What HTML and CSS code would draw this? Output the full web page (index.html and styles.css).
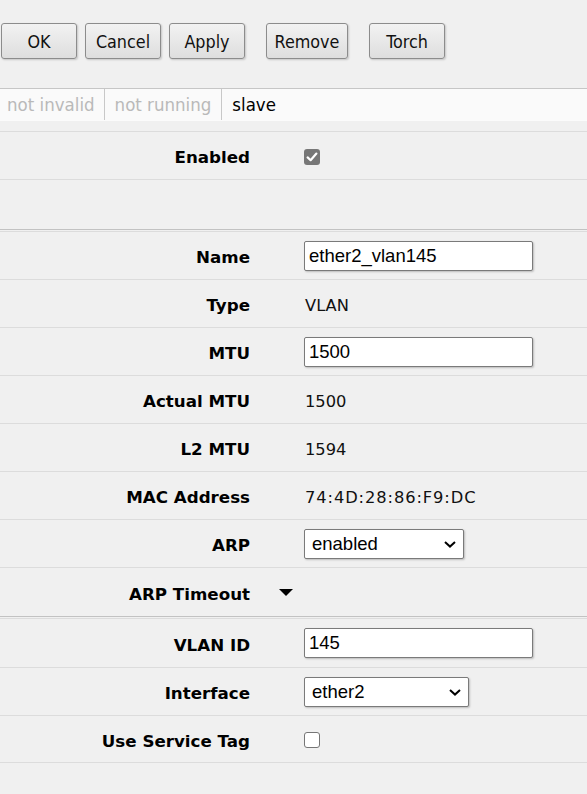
FILE: index.html
```html
<!DOCTYPE html>
<html>
<head>
<meta charset="utf-8">
<title>Interface &lt;ether2_vlan145&gt;</title>
<link rel="stylesheet" href="styles.css">
</head>
<body>
  <div class="toolbar">
    <button class="btn">OK</button>
    <button class="btn">Cancel</button>
    <button class="btn">Apply</button>
    <button class="btn btn-wide btn-apart">Remove</button>
    <button class="btn btn-apart">Torch</button>
  </div>

  <div class="status">
    <div class="status-cell off">not invalid</div>
    <div class="status-cell off">not running</div>
    <div class="status-cell on">slave</div>
  </div>

  <div class="form">
    <div class="section">
      <div class="row">
        <div class="label">Enabled</div>
        <div class="toggle"></div>
        <div class="value">
          <span class="checkbox checked">
            <svg width="16" height="16" viewBox="0 0 16 16"><path d="M3.6 8.4 L6.6 11.2 L12.4 4.6" fill="none" stroke="#fff" stroke-width="2.2" stroke-linecap="round" stroke-linejoin="round"/></svg>
          </span>
        </div>
      </div>
      <div class="row row-blank"></div>
    </div>

    <div class="section">
      <div class="row">
        <div class="label">Name</div>
        <div class="toggle"></div>
        <div class="value"><input class="input" type="text" value="ether2_vlan145"></div>
      </div>
      <div class="row">
        <div class="label">Type</div>
        <div class="toggle"></div>
        <div class="value text">VLAN</div>
      </div>
      <div class="row">
        <div class="label">MTU</div>
        <div class="toggle"></div>
        <div class="value"><input class="input" type="text" value="1500"></div>
      </div>
      <div class="row">
        <div class="label">Actual MTU</div>
        <div class="toggle"></div>
        <div class="value text">1500</div>
      </div>
      <div class="row">
        <div class="label">L2 MTU</div>
        <div class="toggle"></div>
        <div class="value text">1594</div>
      </div>
      <div class="row">
        <div class="label">MAC Address</div>
        <div class="toggle"></div>
        <div class="value text mac">74:4D:28:86:F9:DC</div>
      </div>
      <div class="row">
        <div class="label">ARP</div>
        <div class="toggle"></div>
        <div class="value">
          <div class="select select-arp">
            <span>enabled</span>
            <svg class="chev" width="12" height="7" viewBox="0 0 12 7"><path d="M1 1 L6 5.6 L11 1" fill="none" stroke="#000" stroke-width="2"/></svg>
          </div>
        </div>
      </div>
      <div class="row row-tall">
        <div class="label">ARP Timeout</div>
        <div class="toggle"><span class="tri"></span></div>
        <div class="value"></div>
      </div>
    </div>

    <div class="section">
      <div class="row row-tall">
        <div class="label">VLAN ID</div>
        <div class="toggle"></div>
        <div class="value"><input class="input" type="text" value="145"></div>
      </div>
      <div class="row">
        <div class="label">Interface</div>
        <div class="toggle"></div>
        <div class="value">
          <div class="select select-iface">
            <span>ether2</span>
            <svg class="chev" width="12" height="7" viewBox="0 0 12 7"><path d="M1 1 L6 5.6 L11 1" fill="none" stroke="#000" stroke-width="2"/></svg>
          </div>
        </div>
      </div>
      <div class="row row-short">
        <div class="label">Use Service Tag</div>
        <div class="toggle"></div>
        <div class="value"><span class="checkbox"></span></div>
      </div>
    </div>
  </div>
</body>
</html>
```

FILE: styles.css
```css
html, body {
  margin: 0;
  padding: 0;
  background: #f0f0f0;
}

body {
  width: 587px;
  height: 794px;
  overflow: hidden;
  font-family: "DejaVu Sans", Verdana, sans-serif;
  color: #000;
}

.toolbar {
  display: flex;
  gap: 8px;
  padding: 23px 0 0 1px;
  height: 36px;
}

.btn {
  box-sizing: border-box;
  width: 76px;
  height: 36px;
  margin: 0;
  padding: 1px 0 0;
  border: 1px solid #8c8c8c;
  border-radius: 3px;
  background: linear-gradient(#f2f2f2, #dedede);
  box-shadow: 1px 1px 2px rgba(0, 0, 0, 0.18);
  font-family: "DejaVu Sans Condensed", "DejaVu Sans", sans-serif;
  font-stretch: condensed;
  font-size: 17.8px;
  color: #111;
}

.btn-wide {
  width: 82px;
}

.btn-apart {
  margin-left: 13px;
}

.status {
  display: flex;
  margin-top: 29px;
  height: 31px;
  border-top: 1px solid #c6c6c6;
  border-bottom: 1px solid #fbfbfb;
  background: #fafafa;
}

.status-cell {
  display: flex;
  align-items: center;
  padding: 0 10px 0 10px;
  border-right: 1px solid #c8c8c8;
  font-family: "DejaVu Sans Condensed", "DejaVu Sans", sans-serif;
  font-stretch: condensed;
  font-size: 18.5px;
}

.status-cell:first-child {
  padding-left: 7px;
  padding-right: 9px;
}

.status-cell.off {
  color: #b9b9b9;
}

.status-cell.on {
  border-right: none;
  color: #000;
}

.form {
  margin-top: 10px;
}

.section {
  border-top: 1px solid #dcdcdc;
  margin-top: 1px;
}

.section:first-child {
  margin-top: 0;
}

.row {
  display: grid;
  grid-template-columns: 250px 54px 1fr;
  align-items: center;
  height: 47px;
  border-bottom: 1px solid #dcdcdc;
}

.section:not(:last-child) .row:last-child {
  border-bottom-color: #c2c2c2;
}

.row-blank {
  height: 49px;
}

.row-tall {
  height: 48px;
}

.row-short {
  height: 46px;
}

.label {
  padding-top: 3px;
  text-align: right;
  font-weight: bold;
  font-size: 16.7px;
  color: #000;
  white-space: nowrap;
}

.toggle {
  display: flex;
  align-items: center;
}

.tri {
  display: block;
  margin-left: 29px;
  margin-top: 1px;
  width: 0;
  height: 0;
  border-left: 7px solid transparent;
  border-right: 7px solid transparent;
  border-top: 7px solid #000;
}

.value {
  display: flex;
  align-items: center;
}

.value.text {
  padding-top: 3px;
  padding-left: 1px;
  font-size: 16.3px;
  color: #111;
}

.value.mac {
  letter-spacing: 0.9px;
}

.input {
  box-sizing: border-box;
  width: 229px;
  height: 30px;
  margin: 0;
  padding: 0 4px;
  border: 1px solid #7a7a7a;
  border-radius: 2px;
  background: #fff;
  box-shadow: 1px 1px 2px rgba(0, 0, 0, 0.22);
  font-family: "Liberation Sans", Arial, sans-serif;
  font-size: 18.5px;
  color: #000;
  outline: none;
}

.select {
  box-sizing: border-box;
  display: flex;
  align-items: center;
  justify-content: space-between;
  height: 30px;
  padding: 0 7px 0 7px;
  border: 1px solid #7a7a7a;
  border-radius: 2px;
  background: #fff;
  box-shadow: 1px 1px 2px rgba(0, 0, 0, 0.22);
  font-family: "Liberation Sans", Arial, sans-serif;
  font-size: 18.5px;
  color: #000;
}

.select-arp {
  width: 160px;
}

.select-iface {
  width: 165px;
}

.chev {
  display: block;
  margin-top: 1px;
}

.checkbox {
  box-sizing: border-box;
  display: block;
  width: 16px;
  height: 16px;
  margin-top: 2px;
  border: 1px solid #767676;
  border-radius: 3px;
  background: #fff;
}

.checkbox.checked {
  border: none;
  background: #777;
}

.checkbox svg {
  display: block;
}
```
